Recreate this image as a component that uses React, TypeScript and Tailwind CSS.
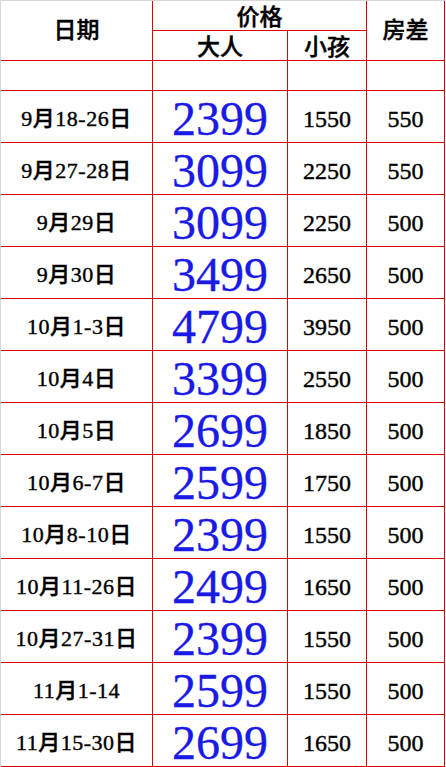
const ROWS: [string, string, string, string][] = [
  ['9月18-26日', '2399', '1550', '550'],
  ['9月27-28日', '3099', '2250', '550'],
  ['9月29日', '3099', '2250', '500'],
  ['9月30日', '3499', '2650', '500'],
  ['10月1-3日', '4799', '3950', '500'],
  ['10月4日', '3399', '2550', '500'],
  ['10月5日', '2699', '1850', '500'],
  ['10月6-7日', '2599', '1750', '500'],
  ['10月8-10日', '2399', '1550', '500'],
  ['10月11-26日', '2499', '1650', '500'],
  ['10月27-31日', '2399', '1550', '500'],
  ['11月1-14', '2599', '1550', '500'],
  ['11月15-30日', '2699', '1650', '500'],
];

const cell = 'flex items-center justify-center border-r border-b border-[#e00000]';

export default function App() {
  return (
    <div className="w-[446px] h-[767px] bg-white border-t border-l border-[#d6d6d6] font-['Liberation_Serif','Noto_Sans_CJK_SC',serif] font-medium text-black [-webkit-text-stroke:0.4px_black]">
      <div className="grid grid-cols-[152px_135px_79px_78px] grid-rows-[30px_30px_30px_repeat(13,52px)]">
        {/* 表头 */}
        <div className={`${cell} row-span-2 text-[23px] pt-[2px]`}>日期</div>
        <div className={`${cell} col-span-2 text-[23px] pt-[6px]`}>价格</div>
        <div className={`${cell} row-span-2 text-[23px] pt-[2px]`}>房差</div>
        <div className={`${cell} text-[23px] pt-[6px]`}>大人</div>
        <div className={`${cell} text-[23px] pt-[6px]`}>小孩</div>

        {/* 空行 */}
        <div className={cell}></div>
        <div className={cell}></div>
        <div className={cell}></div>
        <div className={cell}></div>

        {ROWS.map(([date, adult, child, room]) => (
          <div key={date} className="contents">
            <div className={`${cell} text-[22px] tracking-[0.5px] pt-[4px]`}>{date}</div>
            <div className={`${cell} text-[48px] leading-[44px] text-[#1a1ae6] [-webkit-text-stroke:0.3px_#1a1ae6] pt-[4px]`}>{adult}</div>
            <div className={`${cell} text-[24px] pt-[4px]`}>{child}</div>
            <div className={`${cell} text-[24px] pt-[4px]`}>{room}</div>
          </div>
        ))}
      </div>
    </div>
  );
}
